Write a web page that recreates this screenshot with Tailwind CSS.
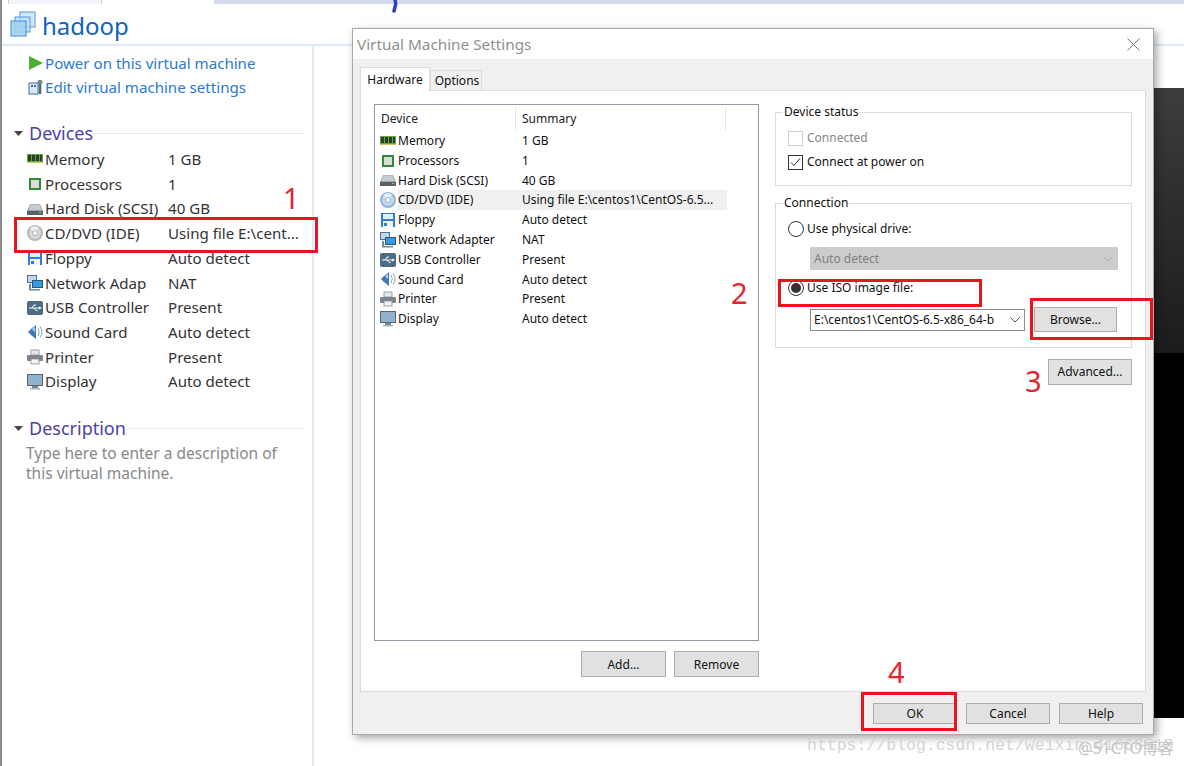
<!DOCTYPE html>
<html lang="en">
<head>
  <meta charset="UTF-8" />
  <title>hadoop - Virtual Machine Settings</title>
  <script src="https://cdn.jsdelivr.net/npm/@tailwindcss/browser@4"></script>
</head>
<body class="bg-white">
<svg class="hidden" width="0" height="0">
  <symbol id="i-mem" viewBox="0 0 16 16">
    <rect x="0" y="3" width="16" height="9" fill="#5cab3c"/>
    <rect x="1" y="4" width="3" height="6" fill="#2f3a2a"/><rect x="5" y="4" width="3" height="6" fill="#2f3a2a"/><rect x="9" y="4" width="3" height="6" fill="#2f3a2a"/><rect x="13" y="4" width="2" height="6" fill="#2f3a2a"/>
    <rect x="0" y="11" width="16" height="1" fill="#d8c25a"/>
  </symbol>
  <symbol id="i-cpu" viewBox="0 0 16 16">
    <rect x="2" y="2" width="12" height="12" fill="#2f8a3c"/>
    <rect x="4" y="4" width="8" height="8" fill="#dcdcd4"/>
  </symbol>
  <symbol id="i-hdd" viewBox="0 0 16 16">
    <path d="M3 3h10l3 7v4H0v-4z" fill="#9aa3ab"/>
    <path d="M3.500 3.500h9l2 5.500H1.500z" fill="#c6ccd2"/>
    <rect x="0" y="10" width="16" height="4" fill="#59626b"/>
    <rect x="12" y="11" width="2" height="1" fill="#8fd06a"/>
  </symbol>
  <symbol id="i-cd" viewBox="0 0 16 16">
    <circle cx="8" cy="8" r="8" fill="#8fb4d8"/>
    <circle cx="8" cy="8" r="6" fill="#c4d8ea"/>
    <path d="M8 8L3 3.500A7 7 0 0 1 12 2.500z" fill="#e9f1f8"/>
    <circle cx="8" cy="8" r="2.500" fill="#f4f7fa" stroke="#7f9dbb" stroke-width=".7"/>
  </symbol>
  <symbol id="i-cdg" viewBox="0 0 16 16">
    <circle cx="8" cy="8" r="8" fill="#b5b8bb"/>
    <circle cx="8" cy="8" r="6" fill="#d6d8da"/>
    <path d="M8 8L3 3.500A7 7 0 0 1 12 2.500z" fill="#eff0f1"/>
    <circle cx="8" cy="8" r="2.500" fill="#f6f6f6" stroke="#9a9da0" stroke-width=".7"/>
  </symbol>
  <symbol id="i-floppy" viewBox="0 0 16 16">
    <rect x="1" y="1" width="14" height="14" fill="#2f7fd0"/>
    <rect x="3" y="2" width="10" height="5" fill="#e6f0fa"/>
    <rect x="3" y="9" width="10" height="6" fill="#f4f7fa"/>
    <rect x="4" y="11" width="3" height="3" fill="#2f7fd0"/>
  </symbol>
  <symbol id="i-net" viewBox="0 0 16 16">
    <rect x="0" y="0" width="10" height="8" fill="#55708a"/>
    <rect x="1" y="1" width="8" height="6" fill="#bcd7ee"/>
    <rect x="5" y="5" width="11" height="8" fill="#33536e"/>
    <rect x="6" y="6" width="9" height="6" fill="#2f9be0"/>
    <rect x="2" y="9" width="2" height="5" fill="#6f8aa3"/>
    <rect x="2" y="14" width="11" height="1.500" fill="#6f8aa3"/>
  </symbol>
  <symbol id="i-usb" viewBox="0 0 16 16">
    <rect x="0" y="1" width="16" height="14" rx="2" fill="#4d6a86"/>
    <path d="M2 8h11M5 8l2-3h2M7 8l2 2.500h1.500" fill="none" stroke="#fff" stroke-width="1"/>
    <path d="M12 6.500l3 1.500-3 1.500z" fill="#fff"/>
  </symbol>
  <symbol id="i-sound" viewBox="0 0 16 16">
    <path d="M1 8q2-2 3-3l5-4v14l-5-4q-1-1-3-3z" fill="#3f78b8"/>
    <path d="M5 5l3-2.500v6z" fill="#a9cdec"/>
    <path d="M11 4q2.500 4 0 8M13 2.500q4 5.500 0 11" fill="none" stroke="#8fa3b5" stroke-width="1"/>
  </symbol>
  <symbol id="i-printer" viewBox="0 0 16 16">
    <rect x="4" y="1" width="8" height="5" fill="#e6e8ea" stroke="#8a9096" stroke-width=".8"/>
    <rect x="0" y="6" width="16" height="6" rx="1" fill="#7d868e"/>
    <rect x="4" y="10" width="8" height="5" fill="#f2f3f4" stroke="#8a9096" stroke-width=".8"/>
  </symbol>
  <symbol id="i-display" viewBox="0 0 16 16">
    <rect x="0" y="0" width="16" height="12" fill="#59646e"/>
    <rect x="1" y="1" width="14" height="10" fill="#8fb2cf"/>
    <rect x="5" y="12" width="6" height="2" fill="#7d868e"/>
    <rect x="3" y="14" width="10" height="1.500" fill="#aab1b7"/>
  </symbol>
</svg>

<div class="relative w-[1184px] h-[766px] overflow-hidden border-l-2 border-[#8c8c8c] font-['Noto_Sans',sans-serif]">

  <!-- Tab strip -->
  <div class="flex h-[4px] items-stretch">
    <div class="ml-[6px] w-[94px] bg-[#f3f4f9] border-x border-[#c9cbd6]"></div>
    <div class="w-[112px]"></div>
    <div class="flex-1 bg-[#d5d9ee]"></div>
  </div>

  <!-- VM header -->
  <div class="flex items-center h-[42px] border-b-2 border-[#dfeaf7] pl-[8px]">
    <svg width="27" height="27" viewBox="0 0 27 27" class="shrink-0">
      <rect x="10" y="1" width="15" height="15" fill="#d3e9f8" stroke="#4f9ad6"/>
      <rect x="5" y="6" width="15" height="15" fill="#bcdff5" fill-opacity=".8" stroke="#4f9ad6"/>
      <rect x="1" y="10" width="15" height="15" fill="#9fd0f0" fill-opacity=".85" stroke="#3d8fd0"/>
    </svg>
    <span class="ml-[5px] pt-[3px] text-[24px] leading-none text-[#0e62bd]">hadoop</span>
  </div>

  <!-- Left column -->
  <div class="w-[312px] h-[720px] border-r-2 border-[#dfeaf7] text-[15.100px] leading-[24.700px] text-[#333]">
    <div class="pt-[5px] pl-[26px] text-[#2a7ad5]">
      <div class="flex items-center h-[24px]">
        <svg width="16" height="16" viewBox="0 0 16 16" class="shrink-0 mr-px"><path d="M1 1l14 7-14 7z" fill="#4cb034"/></svg>
        <span>Power on this virtual machine</span>
      </div>
      <div class="flex items-center h-[24px]">
        <svg width="16" height="16" viewBox="0 0 16 16" class="shrink-0 mr-px"><rect x="1" y="4" width="9" height="11" fill="#dbe9f5" stroke="#3f6f9e"/><rect x="3" y="6" width="2" height="2" fill="#3f6f9e"/><rect x="6" y="6" width="2" height="2" fill="#3f6f9e"/><path d="M12 1v14" stroke="#556666" stroke-width="2.500"/><path d="M9.500 1.500h5v3h-5z" fill="#7d8a94"/></svg>
        <span>Edit virtual machine settings</span>
      </div>
    </div>

    <div class="flex items-center mt-[22px] pl-[12px] h-[24px]">
      <svg width="9" height="5" viewBox="0 0 9 5" class="shrink-0"><path d="M0 0h9L4.500 5z" fill="#444"/></svg>
      <span class="ml-[6px] text-[18px] text-[#4b41a8]">Devices</span>
      <div class="flex-1 h-px bg-[#eaeaea] ml-[2px] mr-[7px]"></div>
    </div>

    <div class="mt-[2px] pl-[25px]">
      <div class="flex items-center"><svg width="16" height="16" class="shrink-0 mr-[2px]"><use href="#i-mem"/></svg><span class="w-[123px]">Memory</span><span>1 GB</span></div>
      <div class="flex items-center"><svg width="16" height="16" class="shrink-0 mr-[2px]"><use href="#i-cpu"/></svg><span class="w-[123px]">Processors</span><span>1</span></div>
      <div class="flex items-center"><svg width="16" height="16" class="shrink-0 mr-[2px]"><use href="#i-hdd"/></svg><span class="w-[123px]">Hard Disk (SCSI)</span><span>40 GB</span></div>
      <div class="flex items-center"><svg width="16" height="16" class="shrink-0 mr-[2px]"><use href="#i-cdg"/></svg><span class="w-[123px]">CD/DVD (IDE)</span><span>Using file E:\cent...</span></div>
      <div class="flex items-center"><svg width="16" height="16" class="shrink-0 mr-[2px]"><use href="#i-floppy"/></svg><span class="w-[123px]">Floppy</span><span>Auto detect</span></div>
      <div class="flex items-center"><svg width="16" height="16" class="shrink-0 mr-[2px]"><use href="#i-net"/></svg><span class="w-[123px]">Network Adap</span><span>NAT</span></div>
      <div class="flex items-center"><svg width="16" height="16" class="shrink-0 mr-[2px]"><use href="#i-usb"/></svg><span class="w-[123px]">USB Controller</span><span>Present</span></div>
      <div class="flex items-center"><svg width="16" height="16" class="shrink-0 mr-[2px]"><use href="#i-sound"/></svg><span class="w-[123px]">Sound Card</span><span>Auto detect</span></div>
      <div class="flex items-center"><svg width="16" height="16" class="shrink-0 mr-[2px]"><use href="#i-printer"/></svg><span class="w-[123px]">Printer</span><span>Present</span></div>
      <div class="flex items-center"><svg width="16" height="16" class="shrink-0 mr-[2px]"><use href="#i-display"/></svg><span class="w-[123px]">Display</span><span>Auto detect</span></div>
    </div>

    <div class="flex items-center mt-[22px] pl-[12px] h-[24px]">
      <svg width="9" height="5" viewBox="0 0 9 5" class="shrink-0"><path d="M0 0h9L4.500 5z" fill="#444"/></svg>
      <span class="ml-[6px] text-[18px] text-[#4b41a8]">Description</span>
      <div class="flex-1 h-px bg-[#eaeaea] ml-[2px] mr-[7px]"></div>
    </div>
    <p class="pl-[24px] mt-[3px] text-[15.500px] leading-[20px] text-[#888]">Type here to enter a description of<br>this virtual machine.</p>
  </div>

  <!-- Background console behind the dialog -->
  <div class="absolute left-[1152px] top-[88px] w-[32px] h-[630px] bg-linear-to-b from-[#3d3d3d] via-[#1c1c1c] via-42% to-black to-42%"></div>

  <!-- Settings dialog -->
  <div class="absolute left-[350px] top-[28px] w-[802px] h-[707px] flex flex-col bg-[#f0f0f0] border border-[#a8a8a8] shadow-[3px_3px_8px_rgba(0,0,0,0.35)] text-[12px] text-[#111]">
    <div class="flex items-center justify-between h-[30px] bg-white pl-[4px] pr-[13px] shrink-0">
      <span class="text-[15.300px] text-[#8f8f8f]">Virtual Machine Settings</span>
      <svg width="13" height="13" viewBox="0 0 13 13"><path d="M.5.500l12 12M12.500.500l-12 12" stroke="#777" stroke-width="1" fill="none"/></svg>
    </div>

    <div class="flex items-end h-[31px] pl-[7px] shrink-0">
      <div class="relative z-10 -mb-px flex items-center justify-center w-[70px] h-[24px] bg-white border border-b-0 border-[#dcdcdc]">Hardware</div>
      <div class="flex items-center justify-center w-[52px] h-[20px] pl-[2px] bg-[#f0f0f0] border border-b-0 border-[#dcdcdc]">Options</div>
    </div>

    <div class="flex gap-[16px] mx-[7px] w-[786px] h-[602px] bg-white border border-[#dcdcdc] pl-[13px] pt-[13px] shrink-0">
      <!-- Device list -->
      <div class="flex flex-col w-[385px]">
        <div class="h-[537px] border border-[#8f98a3] pl-[5px] pt-[2px] leading-[19.800px]">
          <div class="flex h-[23px] items-center text-[#222]">
            <span class="w-[136px] h-full flex items-center pl-px border-r border-[#e5e5e5]">Device</span>
            <span class="w-[210px] h-full flex items-center pl-[6px] border-r border-[#e5e5e5]">Summary</span>
          </div>
          <div class="mt-[1px]">
            <div class="flex items-center"><svg width="16" height="16" class="shrink-0 mr-[2px]"><use href="#i-mem"/></svg><span class="w-[124px]">Memory</span><span>1 GB</span></div>
            <div class="flex items-center"><svg width="16" height="16" class="shrink-0 mr-[2px]"><use href="#i-cpu"/></svg><span class="w-[124px]">Processors</span><span>1</span></div>
            <div class="flex items-center"><svg width="16" height="16" class="shrink-0 mr-[2px]"><use href="#i-hdd"/></svg><span class="w-[124px]">Hard Disk (SCSI)</span><span>40 GB</span></div>
            <div class="flex items-center"><svg width="16" height="16" class="shrink-0 mr-[2px]"><use href="#i-cd"/></svg><span class="w-[124px] bg-[#f0f0f0]">CD/DVD (IDE)</span><span class="w-[205px] bg-[#f0f0f0]">Using file E:\centos1\CentOS-6.5...</span></div>
            <div class="flex items-center"><svg width="16" height="16" class="shrink-0 mr-[2px]"><use href="#i-floppy"/></svg><span class="w-[124px]">Floppy</span><span>Auto detect</span></div>
            <div class="flex items-center"><svg width="16" height="16" class="shrink-0 mr-[2px]"><use href="#i-net"/></svg><span class="w-[124px]">Network Adapter</span><span>NAT</span></div>
            <div class="flex items-center"><svg width="16" height="16" class="shrink-0 mr-[2px]"><use href="#i-usb"/></svg><span class="w-[124px]">USB Controller</span><span>Present</span></div>
            <div class="flex items-center"><svg width="16" height="16" class="shrink-0 mr-[2px]"><use href="#i-sound"/></svg><span class="w-[124px]">Sound Card</span><span>Auto detect</span></div>
            <div class="flex items-center"><svg width="16" height="16" class="shrink-0 mr-[2px]"><use href="#i-printer"/></svg><span class="w-[124px]">Printer</span><span>Present</span></div>
            <div class="flex items-center"><svg width="16" height="16" class="shrink-0 mr-[2px]"><use href="#i-display"/></svg><span class="w-[124px]">Display</span><span>Auto detect</span></div>
          </div>
        </div>
        <div class="flex justify-end gap-[8px] mt-[10px]">
          <div class="flex items-center justify-center w-[85px] h-[26px] pt-px bg-[#e1e1e1] border border-[#adadad]">Add...</div>
          <div class="flex items-center justify-center w-[85px] h-[26px] pt-px bg-[#e1e1e1] border border-[#adadad]">Remove</div>
        </div>
      </div>

      <!-- Right options -->
      <div class="flex flex-col w-[357px]">
        <fieldset class="h-[82px] border border-[#dcdcdc] pl-[12px]">
          <legend class="-ml-[5px] px-px leading-[16px]">Device status</legend>
          <div class="flex items-center h-[16px] mt-[10px] text-[#888]">
            <span class="w-[15px] h-[15px] border border-[#cfcfcf] mr-[4px]"></span>Connected
          </div>
          <div class="flex items-center h-[16px] mt-[8px]">
            <span class="w-[15px] h-[15px] border border-[#333] mr-[4px] flex items-center justify-center">
              <svg width="11" height="9" viewBox="0 0 11 9"><path d="M1 4.500l3 3 6-7" fill="none" stroke="#222" stroke-width="1"/></svg>
            </span>Connect at power on
          </div>
        </fieldset>
        <fieldset class="h-[153px] mt-[9px] border border-[#dcdcdc] pl-[12px]">
          <legend class="-ml-[5px] px-px leading-[16px]">Connection</legend>
          <div class="flex items-center h-[16px] mt-[10px]">
            <span class="w-[16px] h-[16px] rounded-full border border-[#333] mr-[3px]"></span>Use physical drive:
          </div>
          <div class="flex items-center justify-between w-[308px] h-[23px] ml-[22px] mt-[10px] bg-[#cccccc] pl-[4px] pr-[5px] text-[#808080]">
            Auto detect
            <svg width="10" height="6" viewBox="0 0 10 6"><path d="M.5.500L5 5l4.500-4.500" fill="none" stroke="#aaa"/></svg>
          </div>
          <div class="flex items-center h-[16px] mt-[10px]">
            <span class="flex items-center justify-center w-[16px] h-[16px] rounded-full border border-[#333] mr-[3px]"><span class="w-[10px] h-[10px] rounded-full bg-[#333]"></span></span>Use ISO image file:
          </div>
          <div class="flex items-center ml-[22px] mt-[11px]">
            <div class="flex items-center justify-between w-[215px] h-[22px] bg-white border border-[#8c8c8c] pl-[3px] pr-[4px] whitespace-nowrap">
              E:\centos1\CentOS-6.5-x86_64-b
              <svg width="10" height="6" viewBox="0 0 10 6" class="shrink-0"><path d="M.5.500L5 5l4.500-4.500" fill="none" stroke="#555"/></svg>
            </div>
            <div class="flex items-center justify-center w-[83px] h-[25px] ml-[9px] bg-[#e1e1e1] border border-[#adadad]">Browse...</div>
          </div>
        </fieldset>
        <div class="flex items-center justify-center self-end w-[84px] h-[26px] mt-[11px] bg-[#e1e1e1] border border-[#adadad]">Advanced...</div>
      </div>
    </div>

    <div class="flex justify-end gap-[9px] pr-[10px] pt-[11px]">
      <div class="flex items-center justify-center w-[84px] h-[21px] pt-px bg-[#e1e1e1] border border-[#adadad]">OK</div>
      <div class="flex items-center justify-center w-[84px] h-[21px] pt-px bg-[#e1e1e1] border border-[#adadad]">Cancel</div>
      <div class="flex items-center justify-center w-[84px] h-[21px] pt-px bg-[#e1e1e1] border border-[#adadad]">Help</div>
    </div>
  </div>

  <!-- Pen annotations on top of the screenshot -->
  <svg class="absolute left-[389px] top-0" width="10" height="14" viewBox="0 0 10 14"><path d="M4 0q1 3 .5 5T3 11" fill="none" stroke="#2f3fc4" stroke-width="3.500" stroke-linecap="round"/></svg>
  <div class="absolute left-[12px] top-[217px] w-[304px] h-[36px] border-[3px] border-[#e8141f]"></div>
  <div class="absolute left-[776px] top-[279px] w-[204px] h-[28px] border-[3px] border-[#e8141f]"></div>
  <div class="absolute left-[1028px] top-[298px] w-[123px] h-[42px] border-[3px] border-[#e8141f]"></div>
  <div class="absolute left-[859px] top-[692px] w-[96px] h-[39px] border-[3px] border-[#e8141f]"></div>
  <span class="absolute left-[281px] top-[181px] text-[29px] leading-[34px] text-[#e8232c]">1</span>
  <span class="absolute left-[729px] top-[276px] text-[29px] leading-[34px] text-[#e8232c]">2</span>
  <span class="absolute left-[1023px] top-[364px] text-[29px] leading-[34px] text-[#e8232c]">3</span>
  <span class="absolute left-[886px] top-[655px] text-[29px] leading-[34px] text-[#e8232c]">4</span>

  <!-- Watermarks -->
  <span class="absolute left-[805px] top-[737px] font-['Liberation_Mono',monospace] text-[16.500px] leading-[18px] text-[#d4d4d4] whitespace-nowrap">https://blog.csdn.net/weixin_41668518</span>
  <span class="absolute left-[1076px] top-[738px] text-[16px] leading-[20px] text-[#c4c4c4] whitespace-nowrap font-['Noto_Sans','Noto_Sans_CJK_SC',sans-serif]">@51CTO博客</span>
</div>
</body>
</html>
